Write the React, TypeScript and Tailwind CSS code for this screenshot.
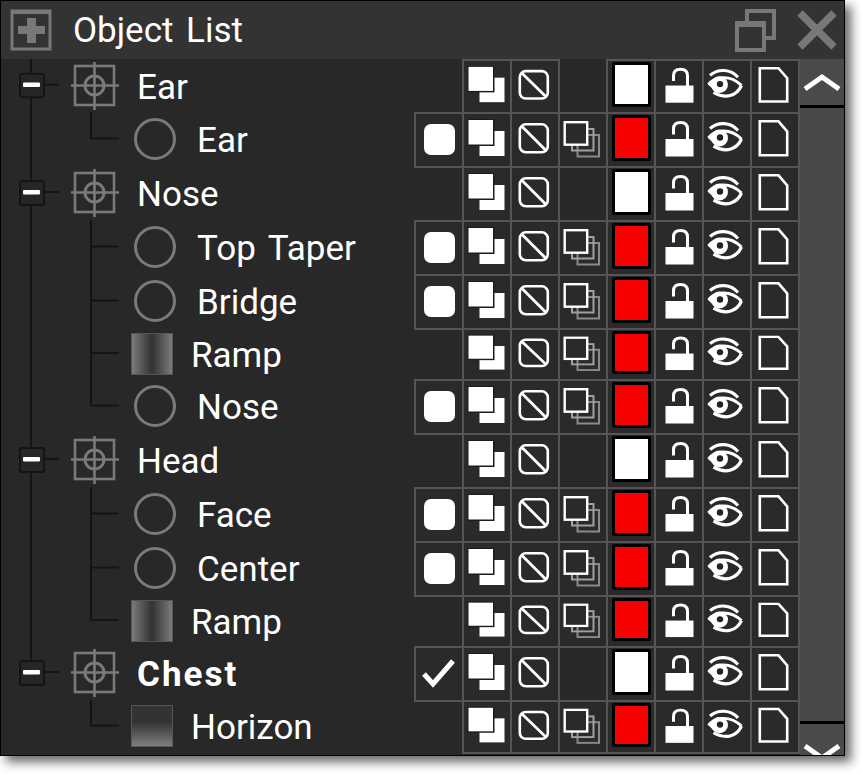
import React from "react";

type RowKind = "group" | "circle" | "ramp" | "horizon";

interface TreeRow {
    label: string;
    kind: RowKind;
    height: string;
    left?: "dot" | "check";
    // tree lines
    trunk: boolean;
    elbowContinues?: boolean;
    bold?: boolean;
}

const rows: TreeRow[] = [
    { label: "Ear", kind: "group", height: "h-[53px]", trunk: true },
    { label: "Ear", kind: "circle", height: "h-[54px]", left: "dot", trunk: true },
    { label: "Nose", kind: "group", height: "h-[54px]", trunk: true },
    { label: "Top Taper", kind: "circle", height: "h-[54px]", left: "dot", trunk: true, elbowContinues: true },
    { label: "Bridge", kind: "circle", height: "h-[54px]", left: "dot", trunk: true, elbowContinues: true },
    { label: "Ramp", kind: "ramp", height: "h-[51px]", trunk: true, elbowContinues: true },
    { label: "Nose", kind: "circle", height: "h-[54px]", left: "dot", trunk: true },
    { label: "Head", kind: "group", height: "h-[54px]", trunk: true },
    { label: "Face", kind: "circle", height: "h-[54px]", left: "dot", trunk: true, elbowContinues: true },
    { label: "Center", kind: "circle", height: "h-[54px]", left: "dot", trunk: true, elbowContinues: true },
    { label: "Ramp", kind: "ramp", height: "h-[51px]", trunk: true },
    { label: "Chest", kind: "group", height: "h-[54px]", left: "check", trunk: false, bold: true },
    { label: "Horizon", kind: "horizon", height: "h-[52px]", trunk: false },
];

const LINE = "#141414";

const Cell: React.FC<{ children?: React.ReactNode }> = ({ children }) => (
    <div className="w-[50px] h-[calc(100%+2px)] -mr-[2px] shrink-0 border-2 border-[#555555] bg-[#2a2a2a] flex items-start justify-center">
        {children}
    </div>
);

const Slot: React.FC = () => <div className="w-[48px] h-full shrink-0" />;

// icons stretch with the row, the short rows squash them a little
const CellSvg: React.FC<{ children: React.ReactNode }> = ({ children }) => (
    <svg width="46" viewBox="0 0 46 52" preserveAspectRatio="none" fill="none" className="h-full shrink-0">
        {children}
    </svg>
);

const LayersIcon = () => (
    <CellSvg>
        <rect x="15.5" y="17" width="25" height="25" fill="#fff" />
        <rect x="3.5" y="5" width="27" height="27" fill="#1c1c1c" />
        <rect x="4.5" y="6" width="24.5" height="24.5" fill="#fff" />
    </CellSvg>
);

const BanIcon = () => (
    <CellSvg>
        <rect x="7.8" y="10.3" width="28" height="28" rx="6" stroke="#fff" strokeWidth="2.6" />
        <path d="M10 12.5 L33.5 36" stroke="#fff" strokeWidth="2.8" />
    </CellSvg>
);

const StackIcon = () => (
    <CellSvg>
        <rect x="17.5" y="21" width="21.5" height="21.5" stroke="#8a8a8a" strokeWidth="2" />
        <rect x="12" y="15" width="21.5" height="21.5" stroke="#a0a0a0" strokeWidth="2" />
        <rect x="4.7" y="8.2" width="22.5" height="22.5" fill="#2a2a2a" stroke="#fff" strokeWidth="2.4" />
    </CellSvg>
);

const LockIcon = () => (
    <CellSvg>
        <rect x="9.5" y="25" width="28" height="17.5" fill="#fff" />
        <path d="M17.5 20.5 V15 C17.5 10 20 8.5 24.5 8.5 C29 8.5 31.5 10 31.5 15 V26" stroke="#fff" strokeWidth="3" />
    </CellSvg>
);

const EyeIcon = () => (
    <CellSvg>
        <g transform="translate(1.5 0)">
            <path d="M4.5 14.5 C13 7.5 25 8 32.5 16.5" stroke="#fff" strokeWidth="3.2" />
            <path d="M3 24 C9 16 24 13 36 25" stroke="#fff" strokeWidth="3" />
            <path d="M36 25 C31 36 20 39 8 32" stroke="#fff" strokeWidth="3.2" />
            <circle cx="14" cy="24" r="8.5" fill="#fff" />
            <path d="M2.5 24 L8 19 V29 Z" fill="#fff" />
            <circle cx="14.5" cy="23.5" r="3.2" fill="#222" />
        </g>
    </CellSvg>
);

const DocIcon = () => (
    <CellSvg>
        <path d="M7.8 7.3 H26.5 L35.2 17.5 V41.2 H7.8 Z" stroke="#fff" strokeWidth="2.6" fill="#2a2a2a" />
    </CellSvg>
);

const Swatch: React.FC<{ red?: boolean }> = ({ red }) => (
    <div
        className={
            red
                ? "mt-[1px] w-[39px] h-[calc(100%-6px)] border-[3px] border-black rounded-[2px] bg-[#f60000]"
                : "mt-[1px] w-[39px] h-[calc(100%-6px)] border-[3px] border-black rounded-[2px] bg-white"
        }
    />
);

const Connector: React.FC<{ row: TreeRow }> = ({ row }) => {
    if (row.kind === "group") {
        return (
            <svg width="69" viewBox="0 0 69 54" preserveAspectRatio="none" className="h-full shrink-0">
                <rect x="29" y="0" width="2" height={row.trunk ? 54 : 15} fill={LINE} />
                <rect x="43" y="25" width="15" height="2" fill={LINE} />
                <rect x="19" y="15" width="24" height="24" rx="2" fill="#262626" stroke={LINE} strokeWidth="2" />
                <rect x="22" y="24" width="17" height="4.5" rx="1" fill="#fff" />
            </svg>
        );
    }
    return (
        <svg width="129" viewBox="0 0 129 54" preserveAspectRatio="none" className="h-full shrink-0">
            {row.trunk && <rect x="29" y="0" width="2" height="54" fill={LINE} />}
            <rect x="89" y="0" width="2" height={row.elbowContinues ? 54 : 27} fill={LINE} />
            <rect x="89" y="25.5" width="29" height="2" fill={LINE} />
        </svg>
    );
};

const TargetIcon = () => (
    <svg width="50" height="50" viewBox="0 0 50 50" fill="none" stroke="#7a7a7a" strokeWidth="2.6" className="shrink-0">
        <rect x="5" y="5" width="39" height="39" />
        <path d="M1 24.5 H49 M24.5 1 V49" />
        <circle cx="24.5" cy="24.5" r="9.5" strokeWidth="3" />
    </svg>
);

const CircleIcon = () => (
    <svg width="42" height="42" viewBox="0 0 42 42" fill="none" className="shrink-0 block">
        <circle cx="21" cy="21" r="19.5" stroke="#7a7a7a" strokeWidth="3" />
    </svg>
);

const App: React.FC = () => {
    return (
        <div className="w-[862px] h-[774px] bg-white overflow-hidden">
            <div
                className="w-[845px] h-[756px] flex flex-col border border-black bg-[#282828] shadow-[6px_6px_10px_rgba(0,0,0,0.6)] text-white text-[35px] leading-none [word-spacing:4px]"
                style={{ fontFamily: 'Roboto, "Noto Sans", sans-serif' }}
            >
                {/* title bar */}
                <div className="h-[58px] shrink-0 flex items-center bg-[#333333]">
                    <svg width="44" height="44" viewBox="0 0 44 44" className="ml-[8px] shrink-0">
                        <rect x="3" y="3" width="38" height="38" fill="none" stroke="#787878" strokeWidth="3" />
                        <rect x="2" y="2" width="40" height="4" fill="#787878" />
                        <rect x="18" y="10" width="9" height="25" fill="#787878" />
                        <rect x="9" y="18" width="27" height="8" fill="#787878" />
                    </svg>
                    <span className="ml-[20px]">Object List</span>
                    <svg width="42" height="46" viewBox="0 0 42 46" className="ml-auto shrink-0" fill="none" stroke="#787878" strokeWidth="4">
                        <rect x="12" y="4" width="27" height="27" />
                        <rect x="2" y="16" width="27" height="27" fill="#333333" />
                        <rect x="2" y="15" width="27" height="5" fill="#787878" stroke="none" />
                    </svg>
                    <svg width="40" height="40" viewBox="0 0 40 40" className="ml-[20px] mr-[7px] shrink-0" stroke="#787878" strokeWidth="7.5">
                        <path d="M3 3 L37 37 M37 3 L3 37" />
                    </svg>
                </div>

                <div className="flex-1 flex min-h-0">
                    {/* tree rows */}
                    <div className="w-[799px] shrink-0 overflow-hidden">
                        {rows.map((row, i) => (
                            <div key={i} className={"flex " + row.height}>
                                <div className="w-[413px] h-full shrink-0 flex items-center">
                                    <Connector row={row} />
                                    {row.kind === "group" && (
                                        <>
                                            <TargetIcon />
                                            <span className={row.bold ? "ml-[17px] mt-[3px] font-bold tracking-[2px]" : "ml-[17px] mt-[3px]"}>{row.label}</span>
                                        </>
                                    )}
                                    {row.kind === "circle" && (
                                        <>
                                            <span className="ml-[4px]"><CircleIcon /></span>
                                            <span className="ml-[21px] mt-[3px]">{row.label}</span>
                                        </>
                                    )}
                                    {row.kind === "ramp" && (
                                        <>
                                            <div className="w-[42px] h-[42px] ml-[1px] shrink-0 border border-[#555555] bg-linear-to-r from-[#7c7c7c] via-[#333333] to-[#7c7c7c]" />
                                            <span className="ml-[18px] mt-[3px]">{row.label}</span>
                                        </>
                                    )}
                                    {row.kind === "horizon" && (
                                        <>
                                            <div className="w-[42px] h-[42px] ml-[1px] shrink-0 border border-[#555555] bg-linear-to-b from-[#333333] from-40% to-[#808080]" />
                                            <span className="ml-[18px] mt-[3px]">{row.label}</span>
                                        </>
                                    )}
                                </div>
                                {row.left === "dot" && (
                                    <Cell>
                                        <div className="mt-[10px] w-[31px] h-[31px] rounded-[7px] bg-white" />
                                    </Cell>
                                )}
                                {row.left === "check" && (
                                    <Cell>
                                        <CellSvg>
                                            <path d="M8 26 L17 36 L37 13" stroke="#fff" strokeWidth="5" fill="none" />
                                        </CellSvg>
                                    </Cell>
                                )}
                                {!row.left && <Slot />}
                                <Cell><LayersIcon /></Cell>
                                <Cell><BanIcon /></Cell>
                                {row.kind === "group" ? <Slot /> : <Cell><StackIcon /></Cell>}
                                <Cell><Swatch red={row.kind !== "group"} /></Cell>
                                <Cell><LockIcon /></Cell>
                                <Cell><EyeIcon /></Cell>
                                <Cell><DocIcon /></Cell>
                            </div>
                        ))}
                    </div>

                    {/* scrollbar */}
                    <div className="flex-1 flex flex-col bg-black">
                        <div className="h-[46px] shrink-0 bg-[#4a4a4a] flex items-center justify-center">
                            <svg width="38" height="20" viewBox="0 0 38 20" fill="none" stroke="#fff" strokeWidth="5">
                                <path d="M2 17 L19 5 L36 17" />
                            </svg>
                        </div>
                        <div className="flex-1 mt-[3px] mb-[3px] bg-[#484848]" />
                        <div className="h-[31px] shrink-0 bg-[#4a4a4a] overflow-hidden flex justify-center">
                            <svg width="38" height="20" viewBox="0 0 38 20" fill="none" stroke="#fff" strokeWidth="5" className="mt-[19px] shrink-0">
                                <path d="M2 3 L19 15 L36 3" />
                            </svg>
                        </div>
                    </div>
                </div>
            </div>
        </div>
    );
};

export default App;
